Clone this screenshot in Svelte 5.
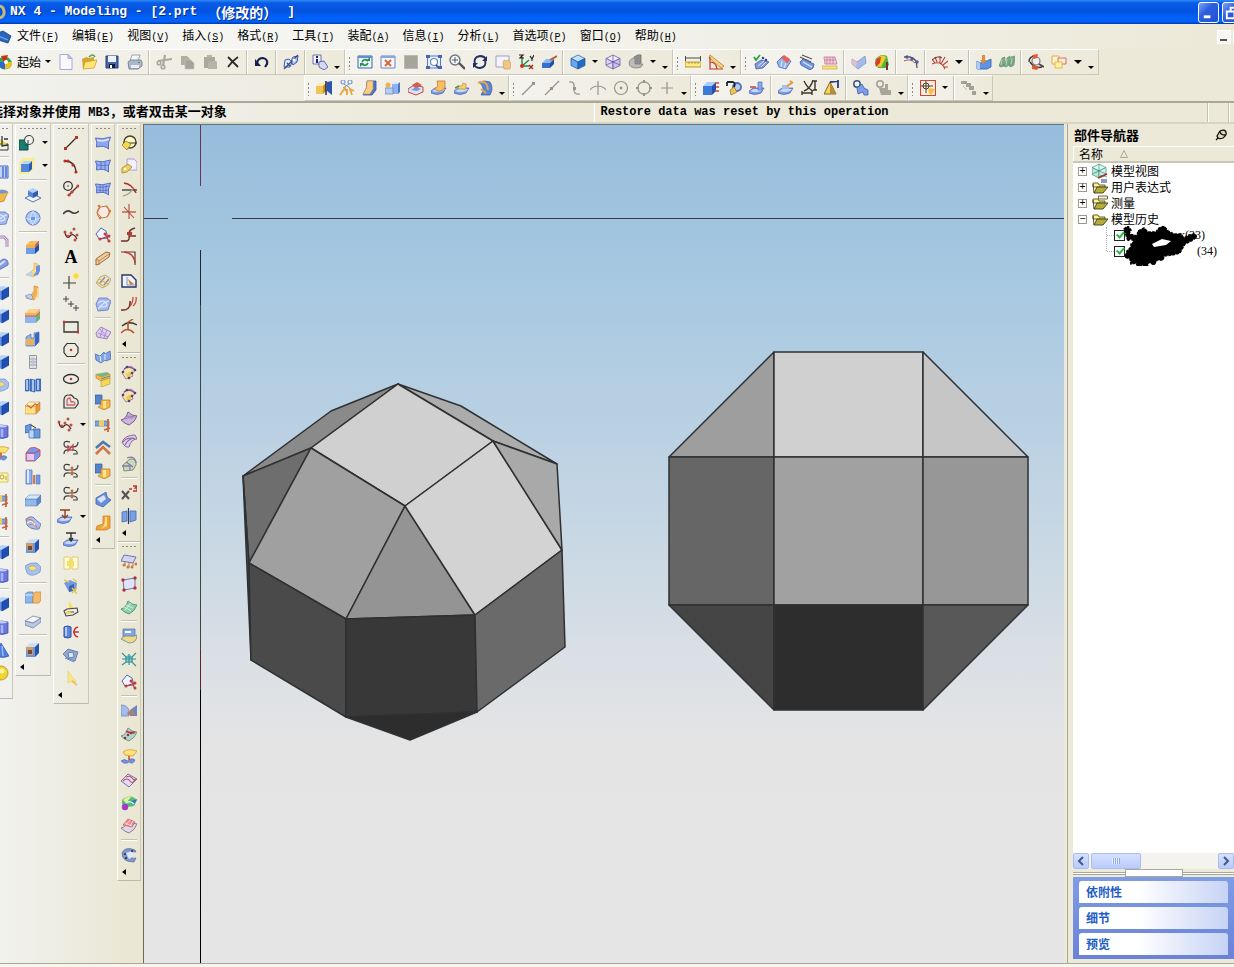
<script>
  const f = (d, fill, stroke = 'none', w = 1) => `<path d="${d}" fill="${fill}" stroke="${stroke}" stroke-width="${w}"/>`;
  const s = (d, stroke, w = 1) => f(d, 'none', stroke, w);
  const c = (x, y, r, fill, stroke = 'none', w = 1) => `<circle cx="${x}" cy="${y}" r="${r}" fill="${fill}" stroke="${stroke}" stroke-width="${w}"/>`;
  const dots = (pts, col, r = 1.3) => pts.map(([x, y]) => c(x, y, r, col)).join('');
  const box = (x, y, w, h, d, front, top, side, line = 'none') =>
    f(`M${x} ${y + d}h${w}v${h}h${-w}z`, front, line, 0.5) +
    f(`M${x} ${y + d}l${d}${-d}h${w}l${-d} ${d}z`, top, line, 0.5) +
    f(`M${x + w} ${y + d}l${d} ${-d}v${h}l${-d} ${d}z`, side, line, 0.5);
  const iso = (x, y, r, top, left, right, line = 'none') =>
    f(`M${x} ${y - r}l${r} ${r / 2}l${-r} ${r / 2}l${-r} ${-r / 2}z`, top, line, 0.7) +
    f(`M${x - r} ${y - r / 2}l${r} ${r / 2}v${r}l${-r} ${-r / 2}z`, left, line, 0.7) +
    f(`M${x + r} ${y - r / 2}l${-r} ${r / 2}v${r}l${r} ${-r / 2}z`, right, line, 0.7);
  const sheet = (fill, line) => f('M0 10q5-1 7-8q4 4 9 4q-2 6-8 9q-4-1-8-5z', fill, line);
  const patch = (fill, line) => f('M.5 3q7 2 15-1q-3 6-2 12q-4-4-12-2q1-5-1-9z', fill, line);
  const slab = f('M0 11l4-3h11l-3 5q-6 3-12 0z', '#7e9ce6', '#4560b8', 0.7) + f('M1 11l4-2h9l-2 2q-6 2-11 0z', '#c9dafa');
  const curves = s('M7 2q-6-2-6 2t5 3h4q5 0 5-5M1 14q0-5 5-4h5q4 1 3 4h-4', '#3a3a38', 1.2);
  const spline = s('M2 6q2 7 5 3t7 3', '#5a2018', 1.3) + dots([[2, 5], [5, 9], [8, 6], [11, 2], [14, 8], [12, 13]], '#b8504a', 1.5);

  const icons = {
    start: f('M3 4a8 7 0 0 1 9 0l3 4a7 7 0 0 1-13 4z', '#35a84a') + f('M8 8l7 0a7 6 0 0 1-7 7z', '#f0c020') + f('M8 8v7a7 6 0 0 1-7-7z', '#2f66d0') + f('M4 2l7-1-3 9z', '#d22b20') + c(9, 8, 2, '#fff'),
    fresh: f('M2 .5h8l4 4v11H2z', '#f8f9ff', '#a5a9d8') + f('M10 .5v4h4z', '#c9ccec', '#a5a9d8'),
    open: f('M1 5l4-2 3 1 5-1v10l-11 2z', '#d6a72e') + f('M4 8l12-2-3 8-11 1z', '#ffe676', '#c69a2a', 0.7) + s('M8 3q4-4 6 0', '#5aa350', 1.5),
    save: f('M2 2h12v12H2z', '#4666ad', '#293c7b') + f('M4 2h8v6H4z', '#edf2ff') + f('M5 10h6v4H5z', '#111c44') + f('M6 11h2v3H6z', '#fff'),
    print: f('M5 1h8l-2 6H3z', '#f7f8fb', '#8992a4', 0.8) + f('M1 8l3-2h10l1 2v4l-4 3H2z', '#adb7c8', '#68758c', 0.8) + f('M4 11h8v3H4z', '#e9edf7') + f('M11 8h2v1h-2z', '#3ca540'),
    cut: s('M2 7l14-2M9 1L7 12', '#aaa79d', 2.2) + c(3, 9, 1.8, 'none', '#aaa79d', 1.6) + c(7, 13, 1.8, 'none', '#aaa79d', 1.6),
    copy: f('M2 2h6l3 3v6H2z', '#b0ada3') + f('M6 6h6l3 3v6H6z', '#a6a399', '#c4c1b6', 0.7),
    paste: f('M2 3h11v11H2z', '#aaa79d') + f('M5 1h5v3H5zM6 7h8l1 1v7H6z', '#b6b3a9'),
    del: s('M3 3q5 5 10 10M13 3q-6 4-10 10', '#2a2a2a', 1.8),
    undo: s('M3 9q1-5 6-5q5 1 4 6l-2 3', '#15204f', 2.2) + f('M1 5v7h6z', '#15204f'),
    link: f('M1 13l1-7 4-1 3 3-2 5z', '#dfe8fc', '#405aa8') + f('M8 7l2-4 5-1-1 6-4 3z', '#a9c2f6', '#405aa8') + s('M1 15L15 1M4 9l3 3', '#344989', 1.2) + dots([[11, 6]], '#fff', 1.5),
    info: f('M1 1h8v9H1z', '#f1f2ff', '#7070a8') + f('M4 2h2v2H4zM4 5h2v4H4z', '#182280') + f('M7 8l5-1 4 6-4 3-5-3z', '#d2d8f5', '#5d6ca6'),
    refresh: f('M1 2h14v12H1z', '#eef5ff', '#3b66a8') + f('M1 2h14v2H1z', '#5e8fd5') + s('M5 8q2-4 6-1M11 9q-2 4-6 1', '#249040', 1.7) + f('M9 7h4V3zM7 9H3v4z', '#249040'),
    fit: f('M1 2h14v12H1z', '#f5f5ff', '#7285bd') + f('M1 2h14v2H1z', '#8da6dd') + s('M5 6l6 6M11 6l-6 6', '#db6030', 1.8),
    block: f('M1.500 1.500h13v13h-13z', '#a5a59b', '#b9b9ae'),
    zoomBox: f('M1.500 2h13v12h-13z', '#e8f1ff', '#5a78c4') + f('M0 1h4v3H0zM12 1h4v3h-4zM0 12h4v3H0zM12 12h4v3h-4z', '#4564b8') + c(8, 8, 3.5, '#fff', '#6d86b8', 1.2) + s('M10 11l3 3', '#4058a5', 1.8),
    zoomIn: c(6, 6, 5, '#f4f7f9', '#70767c', 1.4) + s('M3 6h6M6 3v6', '#585d62') + s('M10 9l6 6', '#555', 2.4),
    rotate: s('M3 10Q1 3 8 2q4 0 6 3M13 6q2 7-5 8q-4 0-6-3', '#232f63', 1.9) + f('M15 2v5h-5zM1 14V9h5z', '#232f63'),
    pan: f('M1 2h13v11H1z', '#f4f3ff', '#9b9fc5') + f('M8 9l1-3 2 1 2-1 3 3-1 6H9z', '#f2c782', '#cc9440', 0.6),
    csys: s('M4 3v9h7M4 12l7-6', '#228440', 1.4) + s('M1 1h4L2 4h4M12 2l2 3 2-4M14 5v2', '#222', 1.2) + s('M11 11l4 4M15 11l-4 4', '#a02c20', 1.4) + dots([[4, 12]], '#d03020', 2),
    paint: box(1, 5, 8, 5, 4, '#356fd0', '#8bb9f5', '#214fa6') + s('M9 6l7-4', '#b06035', 2),
    shade: iso(8, 8, 7, '#bfe3ff', '#67a8ef', '#226cc8', '#1c559f'),
    wire: iso(8, 8, 7, '#f0eeff', '#ddd9f4', '#c8c2e9', '#5c4c9f') + s('M8 1v7M1 11l7-3 7 3', '#5c4c9f', 0.7),
    section: f('M6 3q4-3 7-2v8l-6 4z', '#8f8f8f', '#707070', 0.8) + f('M1 9q1-5 6-5v6h8q-1 4-6 4-8 0-8-5z', '#bcbcba', '#808080', 0.8),
    dist: f('M0 8h16v5H0z', '#ffe982', '#a88720', 0.8) + s('M0 4h16M.500 2v5M15.500 2v5', '#4d4d40') + s('M4 8v2M7 8v2M10 8v2M13 8v2', '#967e26', 0.7),
    angle: f('M2 1l14 11-3 2L1 4z', '#f4d380', '#b38428', 0.8) + s('M2 3v12h13M2 8q6 0 7 7', '#c53328', 1.2),
    sketchOk: f('M2 10l6-4 8 2-6 6-7 1z', '#849bd5', '#4960a0', 0.8) + s('M5 12l6-5M8 13l5-5', '#d9e3ff') + s('M1 3l2 3 4-5', '#25a339', 1.8) + dots([[10, 4], [13, 6]], '#334a8a'),
    gem: f('M1 8l6-6 8 5-5 8-7-2z', '#92b5f0', '#5164af', 0.8) + f('M5 4l3-3 6 4-3 5-2-3z', '#e66456') + s('M6 7l-1 6M10 9l-2 5', '#eef'),
    roller: f('M1 8l3-3 11 5-1 4-3 2L2 11z', '#769ae5', '#4059a0', 0.8) + s('M1 3l11 5M3 1l10 4', '#555', 1.3) + s('M4 8l9 5', '#dbe6ff', 1.4),
    stand: f('M2 3h11l2 7H3z', '#f4cddd', '#b77b94', 0.8) + s('M5 3v7M8 3v7M11 3v7M3 6h10', '#bd7490', 0.7) + f('M0 12h15v3H0z', '#ffe27a', '#c7943a', 0.6),
    ribbon: f('M1 5l5 3 8-6 1 7-8 6-6-5z', '#a3bce9', '#7188bd', 0.7) + f('M1 5l5 3-1 5-4-3z', '#e8bccc'),
    heat: f('M1 6q5-7 12-4l2 9-3 3-8 0z', '#51b743') + f('M3 5q5-6 9-2l-5 10-5-1z', '#f3cc27') + f('M1 9q2-6 6-6l-1 6-4 4z', '#df3928') + s('M13 8v8', '#70362a', 2),
    arcNode: s('M1 3h6q7 1 7 11', '#555', 1.3) + s('M1 7q6-3 11 2', '#b95a50') + dots([[4, 3], [9, 5], [14, 8]], '#4a5cae', 1.7),
    comb: s('M0 10q9-4 13 5M3 9L0 5M5 8L3 3M8 9l0-7M9 10l4-7M11 11l5-4M12 13h4', '#bd3e32', 1.1) + s('M0 6q6-5 10-2', '#6b2c28'),
    mould: f('M1 7l3 2 5-1 6-3v8l-4 2H1z', '#5f94e5', '#335cad', 0.8) + f('M1 7l3 2v6H1z', '#a9ccfa') + f('M6 1h3v5h2l-4 4-3-4h2z', '#e68a32'),
    stripes: f('M0 12l3-8 3-1-1 9-3 1zM5 12l3-8 3-2-1 9-3 2zM10 12l2-9 4-1-1 9-3 2z', '#7ba985', '#568a62', 0.6) + s('M3 5l-1 6M8 5l-1 6M13 4l-1 6', '#b5d3b9'),
    mag: s('M1 8q0-6 7-6M2 8q5 7 12 5', '#333', 1.4) + c(8, 7, 4, '#eceff4', '#8c7770', 1.2) + s('M11 10l5 3', '#444', 1.8) + f('M4 1l6-1-1 4-3 1zM4 11l7 2-2 3-5-1z', '#df5b38'),
    frames: f('M1 2h7v8H1z', '#fff5cd', '#e3a94d') + f('M7 4h8v6H7z', '#ffe8dc', '#ca7654') + f('M4 8h7v6H4z', '#fff3a0', '#d9ae42', 0.8),
    asmA: box(0, 3, 7, 8, 3, '#f1c455', '#fff0a0', '#cf8d2a') + f('M11 2l5-1v14l-5-4z', '#2a55b5') + s('M10 1v14', '#111b42', 1.4),
    asmB: c(4, 2, 2, 'none', '#7e99d1', 1.2) + c(11, 2, 2, 'none', '#7e99d1', 1.2) + s('M5 4l6 4M10 4L4 8', '#7e99d1') + s('M1 15l5-7 1 3M8 15V9M13 15l-2-6 4 2', '#e7a33e', 1.8),
    asmC: f('M5 1h9v9l-4 5H1q5-7 4-14z', '#4f74c8', '#3557a7', 0.8) + f('M5 1h6v8l-3 5H1q5-6 4-13z', '#f8cd82', '#c89448', 0.6),
    asmD: box(7, 2, 6, 10, 2, '#8eb3f3', '#d8e6ff', '#4c75c6') + c(3, 5, 2.5, '#f3ae54') + f('M0 8h8v6H0z', '#b9ccf4', '#6078b0', 0.7),
    asmE: f('M0 9l6-4 9 2v5l-7 3-8-3z', '#dce4f6', '#c44644') + f('M4 5l5-3 5 3-6 4z', '#d35d49') + f('M3 10l6 1 4-2-5-2z', '#7696dd'),
    asmF: slab + f('M6 1h8v6q-2 5-8 4l-2-3q4 0 2-7z', '#f7c063', '#cb772b', 0.8),
    asmG: slab + f('M4 9V6h4l1-3 3 1v5z', '#f0d46b', '#ba8b30', 0.7) + s('M1 8l4-2', '#58924c', 1.4),
    asmH: f('M2 2q5-2 11 0 4 6 0 13H4q5-7-2-13z', '#5887da', '#2f55a9', 0.7) + s('M1 3q9-4 10 7M4 9l5 4', '#eba744', 2),
    gLine: s('M1 15L13 3', '#96948a', 1.2) + f('M11 2h3v3h-3z', '#96948a'),
    gMid: s('M1 15L15 1', '#96948a', 1.2) + f('M6 7h3v3H6z', '#96948a'),
    gCurve: s('M2 2q6-1 5 6t6 6', '#96948a', 1.2) + f('M6 7h3v3H6z', '#96948a'),
    gCross: s('M8 1v14M0 10q3-4 8-4t8 4', '#96948a', 1.2),
    gCircle: c(8, 8, 6.500, 'none', '#96948a', 1.2) + c(8, 8, 1.4, '#96948a'),
    gQuad: c(8, 8, 6.200, 'none', '#96948a', 1.3) + f('M7 0h2v3H7zM7 13h2v3H7zM0 7h3v2H0zM13 7h3v2h-3z', '#96948a'),
    gPlus: s('M8 2v12M2 8h12', '#96948a', 1.2),
    modA: box(0, 2, 9, 9, 4, '#3e79de', '#a5cbff', '#2352aa') + s('M12 3h4M13 7h3M12 11h4', '#cf4a38', 1.4),
    modB: c(11, 7, 4, '#b6c9ee', '#5270b7', 1.8) + s('M1 2h6q3 1 1 5M1 2v4', '#20242f', 1.8) + f('M4 10l4-3 3 5-6 3z', '#f1c557', '#946e20', 0.7),
    modC: slab + f('M9 2h4v8H9z', '#8aa9e8', '#4260b0', 0.6) + s('M1 7h6', '#d04536', 1.5),
    modD: slab + f('M4 5h7v4H4z', '#a6c0f2') + s('M9 6l5-3M12 1l3 2', '#e5952b', 1.8),
    modE: s('M3 1q4 8 9 10M12 0q-2 8-9 11M1 13h10M14 1v9M1 11v4M11 11v4M12 1h4M12 10h4', '#40342c', 1.4),
    modF: f('M0 14L6 2l6 12z', '#f3d45d', '#81662b') + f('M6 2v12h6z', '#bb8e33') + s('M6 2l8-1M14 0v8', '#2c387f', 1.8),
    modG: c(4, 4, 3.200, '#f3f5fd', '#3f507f', 1.5) + f('M4 8l5-4 2 4 4 2v5h-4l-1-3-5 2z', '#7b9ee8', '#3d60a8', 0.8),
    modH: c(4, 4, 3.200, 'none', '#a19f95', 1.5) + f('M3 8h6V4h3v6h3v5H5z', '#a8a59c'),
    snap: f('M.5 .5h15v15H.5z', '#fcecdd', '#c74a36', 1.2) + s('M6 1v12M1 6h12', '#4b3f35') + c(6, 6, 3, 'none', '#4b3f35') + f('M8 8l7 1-4 6-2-2z', '#f3bd42'),
    gPath: f('M0 1h6v3H0zM5 3h5v4H5zM8 6h5v4H8zM11 11h4v4h-4z', '#a3a095') + s('M2 6l4 4', '#bab7ac'),
    sketch: f('M0 5h9v10H0z', '#187d72', '#0e4e48') + c(10, 5, 4.500, '#f0f0ec', '#444', 1.1) + s('M9 5v5H6', '#0e4e48'),
    extr: f('M0 5l4-5h12l-2 12-5 4H0z', '#f6ee90') + box(2, 3, 8, 8, 3, '#5286df', '#b6d5ff', '#285cb2'),
    datum: f('M0 11l8-4 8 4-8 4z', '#edf3ff', '#5b73ac') + iso(8, 6, 5, '#b3cdfa', '#5583d4', '#2e5bb2'),
    ball: c(8, 8, 7, '#a9c5f8', '#5c79bc') + s('M1 8q7 4 14 0M8 1q-5 7 0 14q5-7 0-14', '#e2edff', 0.8) + f('M6 7h4v3H6z', '#6d96e0'),
    cubeO: box(1, 2, 9, 9, 4, '#6f9ee8', '#f5bc61', '#204ea9') + f('M1 6h9v3H1z', '#f2ad47') + f('M10 6l4-4v3l-4 4z', '#c86a50'),
    bend: f('M9 1l4 1v8l-4 5-8-2 6-4q3-2 2-8z', '#f6d88a', '#e0a850', 0.6) + f('M11 4v6l-3 4 5-1 2-4V3z', '#6f90dc') + f('M1 12l5-2 2 2-2 3z', '#bcd0fa'),
    bend2: f('M9 1l4 1v8l-4 5-8-2 6-4q3-2 2-8z', '#f3b050', '#d08030', 0.6) + f('M12 3v7l-3 4 5-2V3z', '#f7d896') + f('M0 11l5-2 3 3-2 3z', '#bcd0fa', '#6a88c4', 0.6),
    layers: box(0, 1, 11, 10, 4, '#8fb5ee', '#ffd385', '#70b27e') + f('M0 5h11l4-4v3l-4 4H0z', '#f0b070') + s('M0 8h11l4-4', '#d85a48'),
    cubeHole: box(1, 1, 9, 10, 4, '#6a94dc', '#c8dcff', '#2455ad') + f('M1 5h7v8H3z', '#d99a5c') + f('M3 8h4v4H3z', '#6d4b36'),
    step: f('M1 6l5-3v4h3V2l5-1v10l-4 4H1z', '#8fb4e8', '#4f74b4', 0.7) + f('M1 8h8v6H1z', '#eeb056') + f('M10 3l4-2v10l-4 4z', '#3d68bc'),
    spring: s('M4.500 1.500h7v13h-7zM5 5h6M5 8h6M5 11h6', '#8f98a8', 1) + s('M6 3h4M6 6.500h4M6 9.500h4M6 13h4', '#c6cfdd'),
    book: f('M0 3l4-1v12H0zM5 2l5 1v12l-5-1zM11 2h5v12h-5z', '#4877c8', '#2d5498', 0.6) + f('M1 3h2v10H1zM7 3h2v11H7zM12 3h2v10h-2z', '#a4c6f8'),
    boxY: box(0, 2, 11, 8, 4, '#ffe083', '#fff3b6', '#e09a3a', '#bf7c39') + s('M2 5l4 3 4-4 3 1', '#dc6046', 1.2),
    cyls: f('M0 3l6-2v8l-6 1zM8 6h7v9H8z', '#6b98df', '#325a9c', 0.7) + f('M4 7h5v8H4z', '#b8d7fa', '#436dac', 0.7) + s('M6 2l5 3', '#333'),
    shell: f('M1 7l4-5q5-2 10 2v6l-5 5H1z', '#7499ed', '#c55a70') + f('M2 8h7v6H2z', '#e6c7ef') + s('M1 7h9l5-3', '#e13a50'),
    pillars: f('M1 1h6v14H1z', '#90b1ec', '#4b6fb8', 0.7) + f('M2 1h2v13H2z', '#dce9ff') + f('M8 6h2v9H8z', '#da7440') + f('M11 6h4v9h-4z', '#779be2', '#4b6fb8', 0.6),
    plate: box(0, 3, 12, 7, 4, '#93b8ea', '#d4e7ff', '#5c88c8', '#5376ac'),
    coils: f('M1 4q6-5 10 1l5 4-2 5q-8 1-12-4z', '#a8bff0', '#5371ad', 0.8) + s('M1 6q5-4 8 2M4 10q6-3 8 3', '#e27a52', 1.2) + s('M2 8q5-4 8 2', '#fff'),
    ovalY: f('M0 5q5-4 12-3l4 4-1 5q-8 6-13 1z', '#a4c1f0', '#7895cc', 0.8) + f('M3 7q4-4 9 0-4 5-9 0z', '#f2e28a', '#c6a64a', 0.7),
    split: f('M0 4l3-2h5v11H0z', '#8ab7ed', '#5c82b8', 0.7) + f('M8 4l2-2h6v8l-2 3H8z', '#f5b967', '#c7853c', 0.7) + s('M0 5h8', '#dbeaff'),
    slabs: f('M0 8l8-5 8 2-8 5z', '#f4f6fd', '#7882a0', 0.8) + f('M0 8l8 2 8-5v4l-8 6-8-3z', '#b9c6e6', '#7882a0', 0.8),
    line: s('M2 14L14 2', '#3a2826', 1.2) + f('M1 12h3v3H1zM12 1h3v3h-3z', '#b83028'),
    arc: s('M2 3q10 0 11 11', '#4c2522', 1.3) + dots([[2, 3], [5, 3], [10, 7], [13, 14]], '#b83028', 1.6),
    tangent: c(5, 5, 4.300, 'none', '#333', 1.3) + dots([[5, 5]], '#333', 0.8) + s('M6 14l8-8', '#6e2925', 1.3) + dots([[6, 14], [9, 11], [15, 5]], '#c43c33', 1.6),
    wave: s('M0 10q4-5 8-2t8-1', '#3b3b38', 1.6),
    spline,
    point: s('M6 3v13M0 10h13', '#444', 1.2) + c(13, 3, 2.800, '#ffe640') + s('M13 0v6M10 3h6', '#f5d21a', 0.6),
    pts: s('M3 0v6M0 3h6M8 5v6M5 8h6M13 9v6M10 12h6', '#444'),
    rect: s('M1 3h14v10H1z', '#333', 1.3) + dots([[1, 3], [15, 13]], '#c6352c', 1.6),
    hex: s('M4 1.500h8l3 4v5l-3 4H4l-3-4v-5z', '#333', 1.2) + c(8, 8, 1.3, '#c6352c'),
    ellipse: s('M.5 8a7.500 4.500 0 0 0 15 0a7.500 4.500 0 0 0-15 0z', '#333', 1.3) + c(8, 8, 1.3, '#c6352c'),
    offset: s('M1 14V6q0-5 5-5 3-1 5 3 5 1 4 6l-3 4z', '#333', 1.2) + s('M4 11V7q0-3 3-3l1 4q4-1 4 2l-1 1z', '#ce606c', 1.3),
    bridgeA: curves + s('M5 5v6l5-6v6', '#c43b43', 1.3),
    bridgeB: curves + s('M9 4v8', '#c5683c', 1.4) + dots([[9, 5], [9, 11]], '#c5683c', 1.4),
    project: slab + s('M3 1h10M8 1v7M5 6l3 3 3-3', '#8b3e26', 1.4),
    project2: slab + s('M3 1h10M8 1v7M6 6l2 3 2-3', '#333', 1.4),
    pages: f('M1 2h6v12H1zM9 2h6v12H9z', '#fffce0', '#e0c050', 0.8) + f('M4 6h7v5H4zM6 4h4v9H6z', '#f5df64'),
    sunBlue: f('M1 5l6-3 7 3-1 8-7 1z', '#7699df') + f('M6 8l5-2v6l-5 2z', '#3e62b8') + s('M1 2l5 2M9 10l5 6M14 10l-5 5M10 1l4 3', '#e5cb41', 1.5),
    wireY: f('M6 0l5 8-5-1z', '#f6e257') + s('M1 10l3-2 10-1 1 4-5 3-7 1zM5 11h6', '#444', 1.1) + s('M3 12l5-1', '#ecd13f', 2),
    cylArrow: f('M1 3q3-2 7 0v10q-3 2-7 0z', '#5c84db', '#294a9c') + s('M3 3v9', '#cfe0ff', 1.5) + s('M15 3q-4 1-4 5t4 5M10 8h6', '#c43435', 1.5),
    cam: f('M0 7l5-5 10 3-3 9-8-3z', '#8fa9d4', '#58719e', 0.8) + f('M5 6l5-1 1 5-5 1z', '#e2e8f6', '#4567a4', 0.7) + s('M2 11l9 4', '#6585c0'),
    pick: f('M5 1l8 11-4-1-4 2z', '#f9e690', '#ecd060', 0.7) + s('M9 11l5 4', '#e9c556', 1.8),
    surfA: patch('#8fa4ee', '#5570c5') + s('M2 5q6 2 12-1', '#dfe8ff', 1.5),
    surfB: patch('#9bb0f2', '#5570c5') + s('M2 7q6 1 12 0M6 4v8M10 4v8', '#4563bc', 0.7),
    surfC: patch('#a3b6f5', '#5570c5') + s('M2 6q6 1 12-1M2 9q5 1 12 0M5 4v8M8 4v8M11 4v8', '#4563bc', 0.7),
    swirl: f('M2 9l3-6 7-1 3 6-3 5-5 1z', '#f4ece4', '#c67d45') + s('M5 3q-5 5-1 10M11 2q6 5 1 11', '#d4793d', 1.2) + dots([[4, 2], [15, 7], [5, 14]], '#d4793d'),
    loopNodes: f('M1 7l5-6 5 3 2 7-9 1z', '#f3f4ff', '#5269b4') + s('M5 12l9-3M10 6l4 9', '#b93a3f', 1.2) + dots([[5, 12], [10, 7], [14, 14], [14, 9]], '#c43a35', 1.5),
    ribbonO: f('M1 9l10-7 4 1-1 4-10 7-3 1z', '#f1cda2', '#9f6a37') + s('M1 9l3 2 10-7M4 11v4', '#9f6a37', 0.7),
    quilt: f('M1 10l4-6 5-2 6 4-3 6-6 3z', '#efe3b8', '#b59a60', 0.8) + s('M5 10l5-6M9 12l5-6', '#7593cc', 1.4) + s('M4 6l9 5M2 9l8 5', '#dca642'),
    cushion: f('M1 8l3-6 8 0 4 3-3 9-10 1z', '#a2b8ee', '#6077bc', 0.8) + s('M3 7q5-4 8 0t-5 4M3 13q7-8 11-8', '#e5ecff', 1.2),
    pinkSheet: f('M1 8l5-6 10 5-4 7L2 12z', '#ddcdf2', '#8a74ae', 0.8) + s('M5 4l8 9M3 8l10 4M8 3l-3 9M12 5l-3 8', '#a888c8', 0.8),
    wings: f('M0 6l5 2 4-4 1 2 5-3 1 8-5 2-1-1-4 3-5-3z', '#80a4e4', '#4a6dac', 0.8) + s('M5 8l1 6M10 6v6', '#e2efff'),
    stack: f('M1 3l11-2 3 2-9 3z', '#6dbb86') + f('M1 3l5 3 9-3v4l-9 3-5-3z', '#f0b947', '#c4783a', 0.6) + f('M6 10l9-3v6l-9 3z', '#f2da56', '#b69938', 0.6) + s('M6 8l9-3', '#4a90c8'),
    joinY: f('M0 1h7v9H0z', '#5482cc', '#385c9e', 0.7) + f('M6 6h9v7l-6 3-6-3 3-2z', '#f1b947', '#bd7531', 0.7) + f('M8 7h3v7H8z', '#ffe58c'),
    flag: f('M0 4h14v5H0z', '#7fa5df', '#4870b0', 0.7) + f('M4 3h5v6H4z', '#ecce67') + s('M13 2v13M9 13l6-2', '#cc6436', 1.8),
    chevrons: s('M1 8l7-6 7 5', '#4f7ab0', 2.6) + s('M1 14l7-7 7 7', '#d37346', 2.6),
    bulge: f('M1 6l7-4 3-2 1 5 4 3-8 7-7-3z', '#688edc', '#4260b0', 0.8) + f('M2 7l7-4 2 4-5 4z', '#d6e4ff'),
    corner: f('M8 1h7v12l-4 2-10 0 1-4 6-2z', '#f0a535', '#c87529', 0.7) + f('M10 2h2v9l-6 3q5-5 4-12z', '#ffdc88'),
    keyRing: c(9, 7, 6, '#fff9c8', '#443f2b', 1.4) + s('M2 8h14', '#333') + f('M1 10l4-4 5 3-4 6z', '#f3d653', '#8d752a', 0.7),
    keyPage: f('M6 1h7l3 3v8H6z', '#f2efff', '#a99fd0') + f('M1 10l6-4 4 3-5 5-5 1z', '#f1d057', '#9a7a29', 0.7) + c(4, 11, 1.2, '#fff'),
    trimA: s('M1 9h15', '#333', 1.3) + s('M3 2q8 1 12 10', '#b32d28', 1.5) + s('M2 15q8-2 10-8', '#a7a7a1', 1.3),
    cross: s('M1 8h14', '#b74136', 1.2) + s('M8 0v15M3 3l10 11', '#b04c42', 1.1),
    sCurve: s('M0 14h6q3-1 2-6t6-7M9 9h6', '#70302a', 1.5) + f('M6 5h5v3H6z', '#b93831'),
    fillet: s('M0 2h14v13', '#57413c', 1.2) + s('M3 2q10 1 11 11', '#be3a30', 1.4),
    chamfer: f('M1 2h9l5 5v7H1z', '#eff3ff', '#263566', 1.4) + s('M6 4v8h8', '#8a94b4') + f('M7 6l6 5-4 1z', '#ce7f40'),
    hook: s('M0 14q10 1 9-9', '#7c3a34', 1.7) + s('M12 1q0 6-3 9M15 1q1 6-3 9', '#c74637', 1.3),
    lift: s('M1 7q7-6 15-1', '#333', 1.4) + s('M0 14q6-7 13 0M7 3v7M12 0l-6 4', '#b5512e', 1.5),
    patchY: f('M1 9l3-5 6-2 5 4-4 3 1 3-7 3z', '#f0e2a8', '#9a84b8') + f('M5 10l3-2 4 1-5 6z', '#ecca50') + s('M3 5q5-4 11 1', '#7c4b99', 1.2) + dots([[2, 8], [6, 3], [14, 6], [8, 14], [11, 9]], '#5c3b79', 1.3),
    purple: sheet('#cbb6dd', '#7d5992') + s('M3 9q5-2 9-1M5 6q4 0 9 1', '#9b78ad'),
    purple2: f('M1 9q3-7 13-7l2 4q-6 0-8 8-4 1-7-5z', '#e0d2ee', '#85659f') + s('M2 9q5-6 12-3M4 12q3-6 9-7', '#8a68a5', 1.2),
    greenP: f('M2 9l7-6q7-1 6 6l-3 5-9 1z', '#c8daba', '#779a69') + s('M6 2q8-3 9 5M1 10h8v4M5 6l7 5', '#8c77ae', 1.3),
    xExp: s('M1 6l7 8M8 6l-7 8', '#555', 2.1) + s('M8 4h3M12 1h4l-2 2h2v3h-4', '#ba3832', 1.3),
    splitV: f('M1 4l5-1v10l-5 1zM9 3h6v9l-6 2z', '#78a1e5', '#4469b1', 0.8) + s('M7.500 0v16', '#26387a', 1.2),
    feet: f('M3 2l12 2-3 6-12-2z', '#d2d6f2', '#7770a8') + s('M4 9v4M8 10v4M12 9v4', '#cc7744') + dots([[3, 12], [7, 14], [11, 14], [15, 11]], '#cc7744', 1.5),
    quadR: f('M2 4l12-2v10L3 14z', '#dfe3fa', '#7872a4') + dots([[2, 4], [14, 2], [14, 12], [3, 14]], '#ad3144', 1.7),
    greenSheet: sheet('#90ceb0', '#539a7d') + s('M3 8l7 4M5 6l7 3M10 4l-6 7', '#dff7e8', 0.8),
    cupY: f('M2 1h12v9l-5 3-7-2z', '#82a8e2', '#526ea8', 0.7) + f('M0 11q3-4 8-3t8-1q0 8-8 8z', '#f0dc80', '#5575b4', 0.7) + s('M4 4h6', '#fff', 2),
    web: f('M4 6l4-3 4 3v5l-8 1z', '#8fd6d2') + s('M1 2l4 4h6l4-4M1 14l4-3h6l4 4M1 8h14M5 6v5M11 6v5M8 3v11', '#348f97', 1.1),
    bow: f('M0 2q6 0 8 5v6H0z', '#a3bced', '#6985bd', 0.7) + f('M9 7l7-5v11H9z', '#6a86c8') + f('M6 10l5-4 4 6H7z', '#a8826a'),
    tealR: sheet('#b2d7c8', '#719887') + s('M5 5q5 3 9 1', '#c23c48', 2) + dots([[7, 9], [10, 7], [4, 12]], '#8c3849'),
    lamp: f('M2 3q5-4 14-1l-4 5-8-1z', '#ffe471', '#d19b31', 0.8) + s('M8 7v4', '#d26d3c', 2) + f('M0 12q3-3 7 0 3-4 7-1-2 5-6 2-4 3-8-1z', '#7890db', '#4960b0', 0.6),
    web2: f('M0 9l7-7 9 5-8 8z', '#e4dbf0', '#836eae') + s('M2 9q4-4 7 0t5-2M5 5q4-2 6 1t4 1', '#b2566e', 1.1),
    rainbow: f('M1 5q5-5 11-3l4 3-3 6-6 1-6-3z', '#57be75') + f('M2 5q4-4 8-3l-5 6z', '#e8f0a0') + f('M8 7l8-3-3 6z', '#3673bd') + c(4, 12, 3.200, '#a43bc8') + s('M5 8q4-3 8 1', '#e3f8e9', 1.5),
    gridR: sheet('#e0d8e6', '#8e7d9d') + f('M2 7l5-6 7 3-3 5z', '#ee8a92', '#c04858', 0.6) + s('M4 5l7 3M9 2l-4 5M12 3l-3 5', '#ffe4e9', 0.8),
    cShape: f('M14 3Q4-1 1 6q0 9 12 9l2-4q-6 1-6-3t6-3z', '#8298c7', '#576b9e', 0.7) + f('M5 6l6-2 2 5-5 3z', '#dfe8fa') + dots([[4, 7], [11, 4], [5, 11]], '#26335d', 1.1),
    prism: f('M0 4l9-3 7 1-7 4z', '#b5d2fb') + f('M0 4l9 2v9l-9-2z', '#5f92e8') + f('M9 6l7-4v9l-7 4z', '#1f4fb4', '#173c92', 0.7),
    cyl: f('M3 3q5-2 12 0v11q-6 3-12 0z', '#6a78d8', '#3546a8', 0.7) + f('M3 3q5-2 12 0-6 3-12 0z', '#c1ccff') + s('M9 6v8', '#a9b5fa', 2.5),
    cone: f('M8 1l8 13q-6 3-13 0z', '#4e7ddc', '#3159ac', 0.7) + s('M9 4l1 10', '#9dbcf4', 1.5),
    sphere: c(8, 8, 7, '#f0d434', '#c2a225') + c(9, 6, 2.500, '#fff29b'),
    finish: s('M1 9h14v6H1z', '#333') + f('M7 4l7 5-5 3z', '#f2d430') + s('M9 1v10l6-1M11 4h4', '#333', 1.3),
    bars: f('M2 2h13v12H2z', '#c3d2fa', '#4b68bd') + s('M6 3v10M10 3v10M13 3v10', '#4d70cf', 1.5),
    knob: f('M3 5q6-4 12 0l-2 4-2 5-4 1z', '#f2ba45', '#c7812e', 0.8) + f('M3 5q6-4 12 0-6 3-12 0z', '#6d93e4'),
    tube: f('M2 9l8-6q6 0 5 6l-9 5z', '#859be2', '#5168b5', 0.8) + s('M5 10l7-5', '#dae3ff', 2),
    pipe: s('M2 4h9l3 3v7', '#a887bd', 3) + s('M2 4h9l3 3v7', '#f1dcee', 1),
    note: f('M1 4h14v9H1z', '#fff6a5', '#d5c366') + s('M7 8a2 2 0 1 0 4 0a2 2 0 1 0-4 0M13 7v4', '#aaa266'),
    mdi: f('M7 2l8 5-3 7-10-3-3-6z', '#2864bb', '#183f7e', 0.8) + s('M2 7l10 4', '#6ea7ed', 1.3),
    axes: iso(7, 8, 7, '#e2f7ef', '#b9e6d9', '#d4f1e8', '#339078') + s('M8 12l7 2M7 1v7M0 11l7-3 7 3', '#339078', 0.7) + s('M6 15l9-4', '#a83128', 1.8),
    folder: f('M1 4h5l1 2h6v2H1z', '#fff18a', '#3e3c16', 0.8) + f('M1 5l1 9h9l5-6H5l-3 6', '#b6ac38', '#3e3c16', 0.9)
  };

  const menus = [['文件', 'F'], ['编辑', 'E'], ['视图', 'V'], ['插入', 'S'], ['格式', 'R'], ['工具', 'T'], ['装配', 'A'], ['信息', 'I'], ['分析', 'L'], ['首选项', 'P'], ['窗口', 'O'], ['帮助', 'H']];

  // "|" separator, "more" overflow marker, trailing "+" adds a drop-down arrow
  const list = (t) => t.split(' ');
  const rowOne = [
    list('start* fresh open save print | cut copy paste del | undo | link | info more'),
    list('refresh fit block zoomBox zoomIn rotate pan csys paint | shade+ wire section+ more'),
    list('dist angle more'),
    list('sketchOk gem roller stand | ribbon heat | arcNode | comb+ | mould stripes | mag frames+ more')
  ];
  const rowTwo = [
    list('asmA asmB asmC asmD asmE asmF asmG asmH more'),
    list('gLine gMid gCurve gCross gCircle gQuad gPlus more'),
    list('modA modB modC | modD modE modF | modG modH more'),
    list('snap+ | gPath more')
  ];
  const palettes = [
    { wide: false, groups: [list('finish | bars knob cushion pipe tube | prism prism prism prism ovalY prism cyl lamp note flag flag | prism cyl | prism cyl cone sphere more')] },
    { wide: true, groups: [list('sketch+ extr+ | datum ball | cubeO bend bend2 layers step spring book boxY cyls shell pillars plate coils cubeHole ovalY | split slabs | cubeHole more')] },
    { wide: true, groups: [list('line arc tangent wave spline A point pts rect hex | ellipse offset spline+ bridgeA bridgeB bridgeB project+ project2 pages sunBlue wireY cylArrow cam pick more')] },
    { wide: false, groups: [list('surfA surfB surfC swirl loopNodes ribbonO quilt cushion | pinkSheet wings stack joinY flag chevrons joinY | bulge corner more')] },
    { wide: false, groups: [
      list('keyRing keyPage trimA cross sCurve fillet chamfer hook lift more'),
      list('patchY patchY purple purple2 greenP | xExp splitV more'),
      list('feet quadR greenSheet | cupY web loopNodes | bow tealR lamp web2 rainbow gridR | cShape more')
    ] }
  ];

  const faces = [
    ['398,384 331,411 243,476 311,448', '#8a8a8a'],
    ['398,384 461,406 557,464 493,441', '#acacac'],
    ['398,384 493,441 405,506 311,448', '#d0d0d0'],
    ['243,476 311,448 249,563', '#6e6e6e'],
    ['243,476 249,563 251,660', '#505050'],
    ['311,448 405,506 346,619 249,563', '#a0a0a0'],
    ['405,506 475,615 346,619', '#949494'],
    ['405,506 493,441 562,550 475,615', '#d3d3d3'],
    ['493,441 557,464 562,550', '#a9a9a9'],
    ['249,563 346,619 346,717 251,660', '#4a4a4a'],
    ['346,619 475,615 477,712 346,717', '#383838'],
    ['475,615 562,550 565,647 477,712', '#6a6a6a'],
    ['346,717 477,712 410,740', '#2d2d2d'],
    ['774,352 774,457 669,457', '#9e9e9e'],
    ['774,352 923,352 923,457 774,457', '#d0d0d0'],
    ['923,352 1028,457 923,457', '#c6c6c6'],
    ['669,457 774,457 774,605 669,605', '#666666'],
    ['774,457 923,457 923,605 774,605', '#a1a1a1'],
    ['923,457 1028,457 1028,605 923,605', '#979797'],
    ['669,605 774,605 774,710', '#454545'],
    ['774,605 923,605 923,710 774,710', '#2d2d2d'],
    ['923,605 1028,605 923,710', '#585858']
  ];
</script>

{#snippet icon(name)}
  <svg class="ico" viewBox="0 0 16 16" aria-hidden="true">{@html icons[name]}</svg>
{/snippet}

{#snippet tool(raw)}
  {#if raw === '|'}
    <span class="sep"></span>
  {:else if raw === 'more'}
    <button class="more" aria-label="more"><i></i></button>
  {:else if raw === 'A'}
    <button class="tool letter">A</button>
  {:else if raw === 'start*'}
    <button class="tool start"><span class="cell">{@render icon('start')}</span><span>起始</span><span class="drop"><i></i></span></button>
  {:else if raw.endsWith('+')}
    <button class="tool split" aria-label={raw.slice(0, -1)}><span class="cell">{@render icon(raw.slice(0, -1))}</span><span class="drop"><i></i></span></button>
  {:else}
    <button class="tool" aria-label={raw}>{@render icon(raw)}</button>
  {/if}
{/snippet}

<div class="app">
  <header class="title">
    <svg class="ico" viewBox="0 0 16 16"><path d="M4 3q8-3 9 4t-7 7" fill="none" stroke="#c8b878" stroke-width="3" /></svg>
    <h1><span>NX 4 - Modeling - [2.prt</span><span class="han">（修改的）</span><span>]</span></h1>
    <button aria-label="minimize"><svg viewBox="0 0 20 20"><path d="M5 13h7v3H5z" fill="#fff" /></svg></button>
    <button aria-label="restore"><svg viewBox="0 0 20 20"><path d="M4 9h8v7H4zM8 8V5h8v7h-3" fill="none" stroke="#fff" stroke-width="2" /></svg></button>
  </header>

  <nav class="menu">
    <span class="doc">{@render icon('mdi')}</span>
    {#each menus as [label, key]}
      <button>{label}<span class="key">(<u>{key}</u>)</span></button>
    {/each}
    <button class="mdi" aria-label="minimize document"><i></i></button>
    <button class="mdi" aria-label="restore document"></button>
  </nav>

  {#each [rowOne, rowTwo] as row, r}
    <div class="bar" class:second={r === 1}>
      {#each row as group, g}
        <div class="group">
          {#if r === 1 || g > 0}<span class="grip"></span>{/if}
          {#each group as t}{@render tool(t)}{/each}
        </div>
      {/each}
    </div>
  {/each}

  <div class="status">
    <p class="cue">选择对象并使用<span>{' MB3'}</span>，或者双击某一对象</p>
    <p class="msg">Restore data was reset by this operation</p>
    <span class="slot"></span><span class="slot last"></span>
  </div>

  <main>
    <aside class="palettes">
      {#each palettes as p}
        <div class="palette" class:wide={p.wide}>
          {#each p.groups as group}
            <div class="vgroup">
              <span class="grip"></span>
              {#each group as t}{@render tool(t)}{/each}
            </div>
          {/each}
        </div>
      {/each}
    </aside>

    <section class="view">
      <svg viewBox="144 125 920 838" preserveAspectRatio="xMinYMin slice">
        <g fill="none" stroke-width="1" shape-rendering="crispEdges">
          <path d="M200.500 125v61" stroke="#6b3550" />
          <path d="M200.500 250v55" stroke="#28242c" />
          <path d="M200.500 305v345" stroke="#39483c" />
          <path d="M200.500 650v40" stroke="#60202c" />
          <path d="M200.500 690v280" stroke="#000" />
          <path d="M144 218.500h24M232 218.500h832" stroke="#3d3050" />
        </g>
        {#each faces as [points, fill]}
          <polygon {points} {fill} stroke="#2e3032" stroke-width="1.5" stroke-linejoin="round" />
        {/each}
      </svg>
    </section>

    <aside class="nav">
      <div class="navhead">
        <h2>部件导航器</h2>
        <button aria-label="pin"><svg class="ico" viewBox="0 0 16 16"><path d="M4 9l3-5q5-2 6 1t-3 6q-5 2-6-2z" fill="#ddd8b6" stroke="#111" stroke-width="1.3" /><path d="M7 4q0 4 5 4M5 11l-2 2" fill="none" stroke="#111" stroke-width="1.3" /></svg></button>
      </div>
      <div class="colhead">名称<svg viewBox="0 0 8 8"><path d="M.5 7.500L4 .5l3.500 7z" fill="none" stroke="#aca899" /></svg></div>
      <div class="tree">
        <ul>
          <li><button class="exp" aria-label="expand">+</button>{@render icon('axes')}<span>模型视图</span></li>
          <li><button class="exp" aria-label="expand">+</button><svg class="ico" viewBox="0 0 16 16">{@html icons.folder}<path d="M9 1h6M9 3h6" stroke="#24348c" /></svg><span>用户表达式</span></li>
          <li><button class="exp" aria-label="expand">+</button><svg class="ico" viewBox="0 0 16 16">{@html icons.folder}<path d="M6.500 1h9v3h-9z" fill="#fff6b0" stroke="#444" stroke-width=".8" /></svg><span>测量</span></li>
          <li><button class="exp" aria-label="collapse">−</button>{@render icon('folder')}<span>模型历史</span></li>
        </ul>
        <div class="kids">
          <label class="kid"><input type="checkbox" checked /><span class="first">x(33)</span></label>
          <label class="kid"><input type="checkbox" checked /><span class="other">(34)</span></label>
          <svg class="ink" viewBox="0 0 74 40" aria-hidden="true">
            <path d="M1 3l4-3 3 4-2 4 8 2 1-5 6-3 4 4 8 0 3-4 5-2 4 5 6 3 6 0 4 4 5-3 6-1 2 3-6 4-6 3-3 5-2 4-8 2-8 1-1 4-6 0-3 5-5-3-2 5-5-2-3 4-3-6-5 1-1-5-5-2 2-6 4-4 0-3 4-3-5-2-2 2z" fill="#000" stroke="#000" stroke-dasharray="3 1" stroke-width="1.5" />
            <path d="M29 18l10-5 9 2-5 4-12 2z" fill="#fff" />
          </svg>
        </div>
      </div>
      <div class="scroll">
        <button aria-label="scroll left"><svg viewBox="0 0 14 14"><path d="M9 3L5 7l4 4" /></svg></button>
        <span class="thumb"><i></i></span>
        <button aria-label="scroll right"><svg viewBox="0 0 14 14"><path d="M5 3l4 4-4 4" /></svg></button>
      </div>
      <div class="splitter"><i></i></div>
      <div class="sections">
        <button>依附性</button>
        <button>细节</button>
        <button>预览</button>
      </div>
    </aside>
  </main>
  <footer></footer>
</div>

<style>
  :global(body) { margin: 0; overflow: hidden; }
  .app {
    display: flex; flex-direction: column; height: 100vh; overflow: hidden;
    background: linear-gradient(90deg, #f1f1ee, #ece9d8 40%);
    color: #000; font: 12px/16px "Noto Sans CJK SC", sans-serif;
  }
  button { margin: 0; padding: 0; border: 0; background: none; font: inherit; color: inherit; }
  h1, h2, p, ul { margin: 0; padding: 0; font-size: inherit; }
  .ico { width: 16px; height: 16px; flex: none; display: block; }

  .title {
    display: flex; align-items: center; height: 24px; flex: none; gap: 3px; margin-right: -9px;
    background: linear-gradient(#2b8cf5, #0a5be8 12%, #0453df 45%, #0162fb 75%, #0160f5 90%, #0038b0);
    color: #fff;
  }
  .title > .ico { margin-left: -9px; }
  .title h1 { flex: 1; display: flex; white-space: pre; font: bold 13px/20px "Liberation Mono", monospace; text-shadow: 1px 1px #0a2f8a; }
  .title .han { font: bold 14px/20px "Noto Sans CJK SC", sans-serif; padding: 0 10px; }
  .title button { width: 21px; height: 21px; border: 1px solid #fff; border-radius: 3px; box-sizing: border-box; background: linear-gradient(135deg, #7fa4f5, #2c5fe0 40%, #2250cc); }
  .title button svg { display: block; width: 19px; height: 19px; }

  .menu { display: flex; align-items: center; gap: 13px; height: 25px; flex: none; background: linear-gradient(90deg, #f7f7f5, #f1f0e8 60%, #ece9d8); overflow: hidden; }
  .menu .doc { margin: 0 -8px 0 -4px; }
  .menu button { flex: none; white-space: nowrap; }
  .key { font: 10px/16px "Liberation Mono", monospace; }
  .menu .mdi { width: 14px; height: 14px; background: #f7f6f0; border: 1px solid #fff; box-sizing: border-box; display: flex; align-items: flex-end; padding: 2px; }
  .menu .mdi i { width: 7px; height: 2px; background: #555; }
  .menu .mdi:nth-last-child(2) { margin-left: auto; margin-right: -11px; }
  .menu .mdi:last-child { margin-right: -13px; }

  .bar { display: flex; height: 26px; flex: none; overflow: hidden; }
  .second { padding-left: 304px; }
  .group { display: flex; align-items: stretch; box-sizing: border-box; border: 1px solid; border-color: #fff #cbc8b8 #cbc8b8 #fff; padding-right: 1px; background: linear-gradient(90deg, #f4f3ee, #edeadb); }
  .second .group { padding-right: 0; }
  .bar:not(.second) .group:first-child { margin-left: -8px; }
  .group .grip { width: 7px; margin: 6px 0 4px; background: radial-gradient(circle, #8d8a7c 1px, transparent 1px) 0 0 / 7px 4px; }
  .tool { display: flex; align-items: center; justify-content: center; width: 23px; height: 23px; flex: none; }
  .cell { width: 23px; display: flex; justify-content: center; flex: none; }
  .start { width: 61px; }
  .start > span:nth-child(2) { width: 26px; white-space: nowrap; }
  .split { width: 35px; }
  .drop { width: 12px; display: flex; justify-content: center; flex: none; }
  .drop i, .more i { border: 3px solid transparent; border-top-color: #000; border-bottom: 0; }
  .bar:not(.second) .group:last-child .split { width: 38px; }
  .bar:not(.second) .group:last-child .drop { width: 15px; }
  .bar:not(.second) .group:last-child .drop i { border-width: 4px 4px 0; }
  .more { width: 12px; display: flex; justify-content: center; align-items: flex-end; padding-bottom: 5px; flex: none; }
  .sep { width: 6px; flex: none; background: linear-gradient(90deg, transparent 2px, #c5c2b2 2px 3px, #fff 3px 4px, transparent 4px); }

  .status { display: flex; height: 23px; flex: none; box-sizing: border-box; border-top: 2px solid #aca899; border-bottom: 2px solid #d8d4c2; font: bold 13px/15px "Noto Sans CJK SC", sans-serif; }
  .status p { white-space: pre; box-sizing: border-box; }
  .cue { flex: 608 0 0; margin-left: -10px; }
  .cue span { font: bold 12px/15px "Liberation Mono", monospace; }
  .msg { flex: 612 0 0; border-left: 1px solid #fff; padding-left: 6px; font: bold 12px/19px "Liberation Mono", monospace; }
  .slot { width: 20px; border-left: 1px solid #fff; box-shadow: -1px 0 #c5c2b2; }
  .last { width: 4px; }

  main { flex: 1; display: flex; min-height: 0; }
  .palettes { display: flex; align-items: flex-start; gap: 2px; flex: none; padding-right: 2px; border-right: 1px solid #6b6a62; margin-left: -11px; background: linear-gradient(90deg, #f2f2f0, #e9e6d2); }
  .palette { width: 24px; }
  .wide { width: 36px; }
  .vgroup { display: flex; flex-direction: column; align-items: center; box-sizing: border-box; border-left: 1px solid #fff; border-right: 1px solid #cbc8b8; border-bottom: 1px solid #bdbaaa; box-shadow: inset 0 1px #fff; padding-bottom: 2px; }
  .vgroup .grip { width: 16px; height: 7px; background: radial-gradient(circle, #8d8a7c 1px, transparent 1px) 0 1px / 4px 7px; }
  .wide .grip { width: 28px; }
  .vgroup .sep { width: auto; height: 6px; align-self: stretch; margin: 0 3px; background: linear-gradient(transparent 2px, #c5c2b2 2px 3px, #fff 3px 4px, transparent 4px); }
  .vgroup .more { height: 12px; align-self: flex-start; align-items: center; padding: 0; }
  .vgroup .more i { border: 3px solid transparent; border-right: 4px solid #000; border-left: 0; }
  .letter { font: bold 18px/23px "Liberation Serif", serif; }

  .view { flex: 1; min-width: 0; background: linear-gradient(#97bddc, #a8c9e1 20%, #b9d0e3 35%, #cbd9e4 52%, #dde1e5 66%, #e4e4e5 74%, #e5e5e5); border-top: 1px solid #5e7483; }
  .view svg { display: block; width: 100%; height: 100%; }

  .nav { width: 161px; flex: none; display: flex; flex-direction: column; border-left: 1px solid #aca899; padding-left: 5px; margin-left: 3px; padding-bottom: 4px; }
  .navhead { display: flex; align-items: center; justify-content: space-between; height: 22px; padding: 0 5px 0 1px; }
  .navhead h2 { font: bold 13px/18px "Noto Sans CJK SC", sans-serif; }
  .colhead { display: flex; align-items: center; gap: 17px; height: 17px; box-sizing: border-box; padding-left: 6px; border-bottom: 2px solid #cbc7b8; box-shadow: inset 1px 1px #fff; }
  .colhead svg { width: 8px; height: 8px; }
  .tree { flex: 1; background: #fff; min-height: 0; overflow: hidden; }
  .tree ul { list-style: none; }
  .tree li { display: flex; align-items: center; height: 16px; padding-left: 5px; gap: 3px; white-space: nowrap; }
  .exp { width: 9px; height: 9px; flex: none; box-sizing: border-box; border: 1px solid #9c9a8c; font: 10px/7px "Liberation Mono", monospace; display: grid; place-items: center; margin-right: 2px; }
  .kids { position: relative; margin-left: 33px; border-left: 1px dotted #b5b0c8; height: 24px; }
  .kid { display: flex; align-items: center; height: 16px; font: 12px/16px "Liberation Serif", serif; }
  .kid::before { content: ""; width: 7px; border-top: 1px dotted #b5b0c8; }
  .kid input { appearance: none; width: 11px; height: 11px; margin: 0; border: 1px solid #222; background: #fff; position: relative; box-sizing: border-box; }
  .kid input:checked::after { content: ""; position: absolute; left: 3px; top: -1px; width: 3px; height: 6px; border: solid #32b84b; border-width: 0 2px 2px 0; transform: rotate(42deg); }
  .kid .first { margin-left: 54px; }
  .kid .other { margin-left: 72px; }
  .ink { position: absolute; left: 16px; top: -1px; width: 74px; height: 40px; }

  .scroll { display: flex; gap: 2px; height: 16px; flex: none; background: #f4f3ee; }
  .scroll button, .thumb { width: 16px; height: 16px; box-sizing: border-box; border: 1px solid #a9bdf0; border-radius: 2px; background: linear-gradient(#d6e1ff, #bacbfa); flex: none; }
  .scroll svg { display: block; width: 14px; height: 14px; fill: none; stroke: #40588c; stroke-width: 2; }
  .thumb { width: 50px; margin-right: auto; display: grid; place-items: center; }
  .thumb i { width: 8px; height: 6px; background: repeating-linear-gradient(90deg, #eef3ff 0 1px, #8ea6e6 1px 2px); }
  .splitter { height: 8px; flex: none; display: flex; justify-content: center; background: linear-gradient(transparent 3px, #aca899 3px 4px, #fff 4px 5px, #aca899 5px 6px, transparent 6px); }
  .splitter i { width: 58px; background: #fff; border: 1px solid #aca899; box-sizing: border-box; }
  .sections { flex: none; display: flex; flex-direction: column; gap: 4px; padding: 4px 6px; background: linear-gradient(#7f9de5, #6a82d8); }
  .sections button { height: 22px; padding-left: 7px; text-align: left; border-radius: 3px 3px 0 0; background: linear-gradient(90deg, #fff 40%, #c6d3f5); color: #215dc6; font: bold 12px/20px "Noto Sans CJK SC", sans-serif; }
  footer { height: 4px; flex: none; border-top: 1px solid #aca899; box-sizing: border-box; background: #f6f5ee; }
</style>
